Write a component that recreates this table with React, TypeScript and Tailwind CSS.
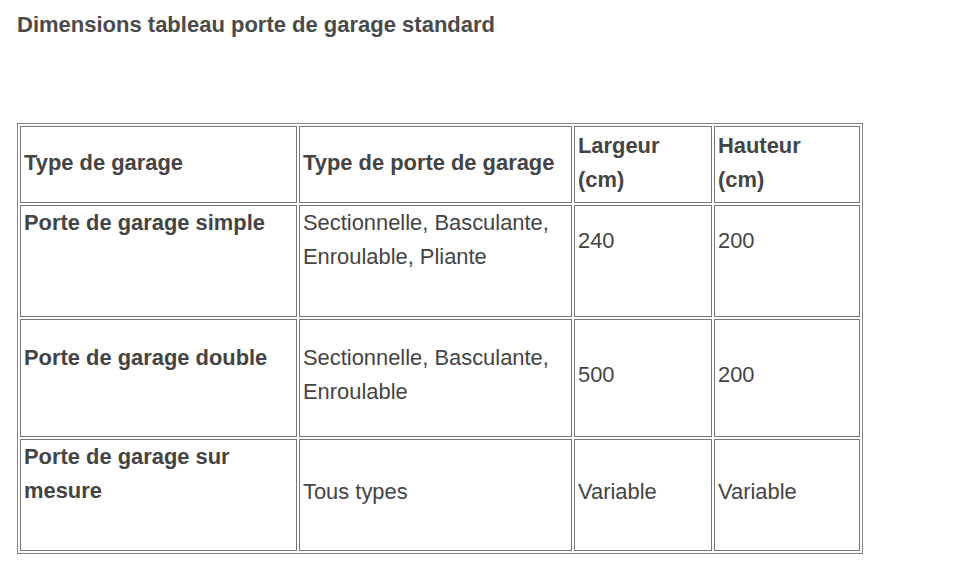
import React from "react";

const font = { fontFamily: '"Liberation Sans", Arial, sans-serif' };

function Cell({ children, pt, bold }: { children: React.ReactNode; pt: string; bold?: boolean }) {
  return (
    <div
      className={`border border-[#767676] bg-white pl-[3px] pr-[2px] ${pt} ${bold ? "font-bold" : ""}`}
    >
      {children}
    </div>
  );
}

export default function App() {
  return (
    <div className="w-[967px] h-[580px] bg-white text-[#444] overflow-hidden" style={font}>
      <div className="pt-[8px] pl-[17px] text-[22px] leading-[34px] font-bold text-[#4a4a4a]">
        Dimensions tableau porte de garage standard
      </div>
      <div className="ml-[17px] mt-[81px] w-[846px] border border-[#858585] p-[2px]">
        <div className="grid grid-cols-[277px_273px_138px_146px] grid-rows-[77px_112px_118px_112px] gap-[2px] text-[21.9px] leading-[34px]">
          <Cell pt="pt-[19px]" bold>Type de garage</Cell>
          <Cell pt="pt-[19px]" bold>Type de porte de garage</Cell>
          <Cell pt="pt-[2px]" bold>Largeur<br />(cm)</Cell>
          <Cell pt="pt-[2px]" bold>Hauteur<br />(cm)</Cell>

          <Cell pt="pt-[0px]" bold>Porte de garage simple</Cell>
          <Cell pt="pt-[0px]">Sectionnelle, Basculante,<br />Enroulable, Pliante</Cell>
          <Cell pt="pt-[18px]">240</Cell>
          <Cell pt="pt-[18px]">200</Cell>

          <Cell pt="pt-[21px]" bold>Porte de garage double</Cell>
          <Cell pt="pt-[21px]">Sectionnelle, Basculante,<br />Enroulable</Cell>
          <Cell pt="pt-[38px]">500</Cell>
          <Cell pt="pt-[38px]">200</Cell>

          <Cell pt="pt-[0px]" bold>Porte de garage sur<br />mesure</Cell>
          <Cell pt="pt-[35px]">Tous types</Cell>
          <Cell pt="pt-[35px]">Variable</Cell>
          <Cell pt="pt-[35px]">Variable</Cell>
        </div>
      </div>
    </div>
  );
}
